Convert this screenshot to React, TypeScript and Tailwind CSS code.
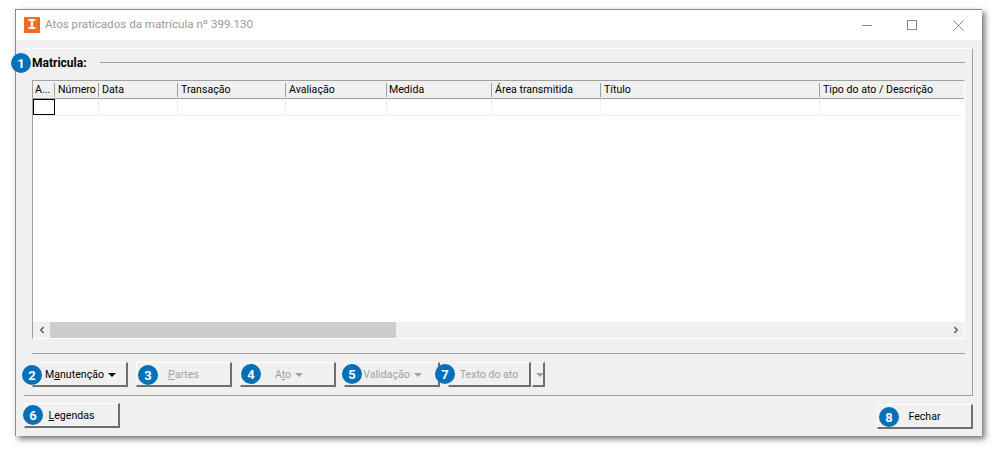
import { ChevronLeft, ChevronRight } from 'lucide-react';

const columns = [
  { label: 'A...', width: 'w-[22px]', pad: 'pl-[2px]' },
  { label: 'Número', width: 'w-[44px]', pad: 'pl-[3px]' },
  { label: 'Data', width: 'w-[79px]', pad: 'pl-[3px]' },
  { label: 'Transação', width: 'w-[108px]', pad: 'pl-[3px]' },
  { label: 'Avaliação', width: 'w-[101px]', pad: 'pl-[3px]' },
  { label: 'Medida', width: 'w-[105px]', pad: 'pl-[2px]' },
  { label: 'Área transmitida', width: 'w-[109px]', pad: 'pl-[3px]' },
  { label: 'Título', width: 'w-[219px]', pad: 'pl-[3px]' },
  { label: 'Tipo do ato / Descrição', width: 'flex-1', pad: 'pl-[3px]' },
];

function Badge({ n, className }: { n: number; className: string }) {
  return (
    <span
      className={`absolute flex h-5 w-5 items-center justify-center rounded-full bg-[#0070b8] text-[13px] font-bold text-white ${className}`}
    >
      {n}
    </span>
  );
}

function Caret({ disabled }: { disabled?: boolean }) {
  return (
    <span
      className={`ml-[4px] inline-block h-0 w-0 border-x-[4px] border-t-[4px] border-x-transparent ${
        disabled ? 'border-t-[#a0a0a0]' : 'border-t-black'
      }`}
    />
  );
}

function WinButton({
  children,
  width,
  disabled,
  className = '',
}: {
  children: React.ReactNode;
  width: string;
  disabled?: boolean;
  className?: string;
}) {
  return (
    <div
      className={`relative flex h-[25px] shrink-0 items-center justify-center border-t border-l border-r-2 border-b-2 border-t-white border-l-white border-r-[#6f6f6f] border-b-[#6f6f6f] bg-[#f0f0f0] pt-[2px] ${
        disabled ? 'text-[#a0a0a0]' : 'text-black'
      } ${width} ${className}`}
    >
      {children}
    </div>
  );
}

export default function App() {
  return (
    <div className="h-[450px] w-[995px] overflow-hidden bg-white pt-[9px] pl-[15px] font-['Roboto','Noto_Sans',sans-serif] text-[10.6px] leading-none">
      <div className="flex h-[427px] w-[967px] flex-col border-t border-l border-[#8c8c8c] bg-[#f0f0f0] shadow-[3px_3px_6px_rgba(0,0,0,0.55)]">
        {/* title bar */}
        <div className="flex h-[30px] shrink-0 items-center bg-white pl-[8px]">
          <span className="flex h-4 w-4 items-center justify-center bg-[#f26c21] font-['Liberation_Mono',monospace] text-[15px] font-bold text-white">
            I
          </span>
          <span className="ml-[5px] text-[11.6px] text-[#999999]">Atos praticados da matrícula nº 399.130</span>
          <div className="ml-auto flex items-center pr-[18px]">
            <svg width="11" height="11" viewBox="0 0 11 11" className="mr-[34px]">
              <path d="M0 5.5h10" stroke="#8a8a8a" fill="none" />
            </svg>
            <svg width="11" height="11" viewBox="0 0 11 11" className="mr-[35px]">
              <rect x="0.5" y="0.5" width="9" height="9" stroke="#8a8a8a" fill="none" />
            </svg>
            <svg width="11" height="11" viewBox="0 0 11 11">
              <path d="M0.5 0.5l10 10M10.5 0.5l-10 10" stroke="#8a8a8a" fill="none" />
            </svg>
          </div>
        </div>

        <div className="flex flex-1 flex-col pr-[9px] pl-[8px] pt-[8px]">
          {/* group panel */}
          <div className="flex h-[348px] shrink-0 flex-col border-t border-r border-b border-t-white border-r-[#a0a0a0] border-b-[#a0a0a0] pr-[7px] pl-[8px]">
            <div className="relative mt-[7px] flex h-[13px] items-center">
              <Badge n={1} className="top-[-3px] left-[-21px]" />
              <span className="font-bold text-[12px] text-black">Matricula:</span>
              <div className="ml-[13px] h-px flex-1 bg-[#a0a0a0]" />
            </div>

            {/* grid */}
            <div className="mt-[11px] flex h-[259px] flex-col border-t border-r border-b border-l border-t-[#a0a0a0] border-l-[#a0a0a0] border-r-white border-b-white bg-white">
              <div className="flex h-[18px] shrink-0 items-center border-b border-[#a0a0a0] bg-[#f0f0f0] text-black">
                {columns.map((c, i) => (
                  <div
                    key={c.label}
                    className={`flex h-[14px] items-center whitespace-nowrap pt-[2px] ${c.width} ${c.pad} ${
                      i < columns.length - 1 ? 'border-r border-[#a0a0a0]' : ''
                    }`}
                  >
                    {c.label}
                  </div>
                ))}
              </div>
              <div className="flex h-[17px] shrink-0 border-b border-[#f0f0f0]">
                {columns.map((c, i) => (
                  <div
                    key={c.label}
                    className={`${c.width} ${
                      i === 0 ? 'border-[1.5px] border-black' : i < columns.length - 1 ? 'border-r border-[#f0f0f0]' : ''
                    }`}
                  />
                ))}
              </div>
              <div className="flex-1" />
              <div className="flex h-[16px] shrink-0 items-center bg-[#f0f0f0]">
                <div className="flex h-full w-[17px] items-center justify-center">
                  <ChevronLeft size={10} strokeWidth={3.5} color="#555" />
                </div>
                <div className="h-full w-[346px] bg-[#cdcdcd]" />
                <div className="flex-1" />
                <div className="flex h-full w-[17px] items-center justify-center">
                  <ChevronRight size={10} strokeWidth={3.5} color="#555" />
                </div>
              </div>
            </div>

            <div className="mt-[14px] h-px bg-[#a0a0a0]" />

            {/* action buttons */}
            <div className="mt-[8px] flex">
              <WinButton width="w-[96px]">
                <Badge n={2} className="top-[2px] left-[-11px]" />
                <span className="pl-[2px]">
                  M<span className="underline">a</span>nutenção
                </span>
                <Caret />
              </WinButton>
              <WinButton width="w-[96px]" disabled className="ml-[8px]">
                <Badge n={3} className="top-[2px] left-[1px]" />
                <span className="underline">P</span>artes
              </WinButton>
              <WinButton width="w-[96px]" disabled className="ml-[8px]">
                <Badge n={4} className="top-[1px] left-[0px]" />
                <span className="pl-[3px]">
                  A<span className="underline">t</span>o
                </span>
                <Caret disabled />
              </WinButton>
              <WinButton width="w-[96px]" disabled className="ml-[8px]">
                <Badge n={5} className="top-[1px] left-[-3px]" />
                <span className="pl-[2px]">Validação</span>
                <Caret disabled />
              </WinButton>
              <WinButton width="w-[83px]" disabled className="ml-[8px]">
                <Badge n={7} className="top-[1px] left-[-14px]" />
                <span>Texto do ato</span>
              </WinButton>
              <WinButton width="w-[13px]" disabled className="ml-[1px]">
                <Caret disabled />
              </WinButton>
            </div>
          </div>

          {/* footer */}
          <div className="mt-[7px] flex items-start justify-between">
            <WinButton width="w-[96px]">
              <Badge n={6} className="top-[1px] left-[-2px]" />
              <span>
                <span className="underline">L</span>egendas
              </span>
            </WinButton>
            <WinButton width="w-[96px]" className="mt-px">
              <Badge n={8} className="top-[2px] left-[1px]" />
              Fechar
            </WinButton>
          </div>
        </div>
      </div>
    </div>
  );
}
